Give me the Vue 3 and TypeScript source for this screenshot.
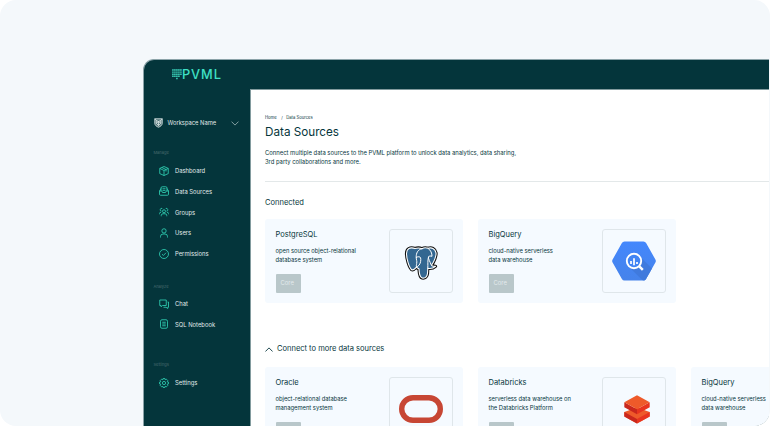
<script setup lang="ts">
type IconName = 'box' | 'inbox' | 'groups' | 'user' | 'check' | 'chat' | 'notebook' | 'gear'
type LogoName = 'postgres' | 'bigquery' | 'oracle' | 'databricks'

interface NavItem { label: string; icon: IconName }
interface NavSection { title: string; items: NavItem[] }
interface Source { name: string; lines: [string, string]; logo: LogoName }

const icons: Record<IconName, string[]> = {
  box: ['M10 1 18.500 4.800v10.400L10 19l-8.500-3.800V4.800z', 'M1.500 4.800 10 9l8.500-4.200M10 9v10M5.700 3l8.300 4v4'],
  inbox: ['M1 10h4.500l1.500 3h6l1.500-3H19v6.500a2 2 0 0 1-2 2H3a2 2 0 0 1-2-2z', 'M1 10l3-5M19 10l-3-5', 'M4 10V4a2.500 2.500 0 0 1 2.500-2.500h7A2.500 2.500 0 0 1 16 4v6M7 5.500h6M7 8.800h6'],
  groups: ['M10 5.500a3 3 0 1 1 0 6 3 3 0 0 1 0-6z', 'M4.500 18.500v-1.500a3.500 3.500 0 0 1 3.500-3.500h4a3.500 3.500 0 0 1 3.500 3.500v1.500', 'M5 8.300A2.800 2.800 0 1 1 6.500 3M15 8.300A2.800 2.800 0 1 0 13.500 3', 'M.8 14.500v-1.500A3 3 0 0 1 4 10.500M19.200 14.500v-1.500A3 3 0 0 0 16 10.500'],
  user: ['M10 1.500a4.300 4.300 0 1 1 0 8.600 4.300 4.300 0 0 1 0-8.600z', 'M3 19v-2a5 5 0 0 1 5-5h4a5 5 0 0 1 5 5v2'],
  check: ['M10 1a9 9 0 1 1 0 18 9 9 0 0 1 0-18z', 'M6 10.300l2.800 2.700L14 7.500'],
  chat: ['M1.500 2h13v11H7l-3 2.500V13H1.500z', 'M17 6h2v10.500h-1.500V19L14 16.500H9'],
  notebook: ['M6 1.500h8a3 3 0 0 1 3 3v11a3 3 0 0 1-3 3H6a3 3 0 0 1-3-3v-11a3 3 0 0 1 3-3z', 'M6.500 6.500h7M6.500 10h7M6.500 13.500h7'],
  gear: ['M8.300 1h3.400l.6 2.600 2.400-1.300 2.900 2.900-1.300 2.400 2.700.7v3.400l-2.700.7 1.300 2.400-2.900 2.900-2.400-1.300-.6 2.600H8.300l-.6-2.600-2.400 1.300-2.900-2.900 1.300-2.400L1 11.700V8.300l2.700-.7-1.300-2.400 2.900-2.900 2.400 1.300z', 'M10 6.800a3.200 3.200 0 1 1 0 6.400 3.200 3.200 0 0 1 0-6.400z'],
}

const sections: NavSection[] = [
  {
    title: 'Manage',
    items: [
      { label: 'Dashboard', icon: 'box' },
      { label: 'Data Sources', icon: 'inbox' },
      { label: 'Groups', icon: 'groups' },
      { label: 'Users', icon: 'user' },
      { label: 'Permissions', icon: 'check' },
    ],
  },
  {
    title: 'Analyze',
    items: [
      { label: 'Chat', icon: 'chat' },
      { label: 'SQL Notebook', icon: 'notebook' },
    ],
  },
  { title: 'Settings', items: [{ label: 'Settings', icon: 'gear' }] },
]

const groups: { id: string; sources: Source[] }[] = [
  {
    id: 'connected',
    sources: [
      { name: 'PostgreSQL', lines: ['open source object-relational', 'database system'], logo: 'postgres' },
      { name: 'BigQuery', lines: ['cloud-native serverless', 'data warehouse'], logo: 'bigquery' },
    ],
  },
  {
    id: 'more',
    sources: [
      { name: 'Oracle', lines: ['object-relational database', 'management system'], logo: 'oracle' },
      { name: 'Databricks', lines: ['serverless data warehouse on', 'the Databricks Platform'], logo: 'databricks' },
      { name: 'BigQuery', lines: ['cloud-native serverless', 'data warehouse'], logo: 'bigquery' },
    ],
  },
]

const dotColumns = [4, 4, 5, 4, 3]

const elephant =
  'M12 3.600C7 1.500 3.500 4 3.500 8.500c0 5 2.500 14 5.200 16.200 1.600 1 3-.7 4.800-2.700 1 1.500 2 1.500 2.500 2 .3 2.500 0 8 3.200 9 3 .5 5-1.500 5.300-4.500.2-2.200.2-4 .3-5.200 2.800.5 5.200.3 7.700-2-1.500-.3-3.500.3-4-1 2.500-3.500 5-9.500 4.500-12.500C32 3.500 28.500 2 25 3.300c-2-.8-4-.8-6 .4-2.400-1-5-.9-7-.1z'
</script>

<template>
  <div class="stage">
    <div class="window">
      <header class="topbar">
        <svg class="brand-mark" viewBox="0 0 10 11">
          <template v-for="(count, c) in dotColumns" :key="c">
            <rect v-for="r in count" :key="r" :x="c * 2 + 0.2" :y="(r - 1) * 2.1 + 0.3" width="1.450" height="1.450" rx="0.200" />
          </template>
        </svg>
        <span class="brand-name">PVML</span>
      </header>

      <div class="body">
        <aside class="sidebar">
          <div class="workspace">
            <svg class="shield" viewBox="0 0 18 20">
              <path d="M1.500 1.500h15v9c0 4-3.500 6.500-7.500 8-4-1.500-7.500-4-7.500-8z" />
              <path d="M4.500 5l4.500 2 4.500-2v5.500L9 15l-4.500-4.500zM9 7v8M4.500 10.500 9 7l4.500 3.500M1.500 1.500l3 3.500M16.500 1.500l-3 3.500" />
            </svg>
            <span class="workspace-name">Workspace Name</span>
            <svg class="chevron" viewBox="0 0 8 5"><path d="M.5.600 4 4.100 7.500.600" /></svg>
          </div>

          <nav>
            <section v-for="s in sections" :key="s.title" class="nav-section">
              <div class="nav-title">{{ s.title }}</div>
              <div v-for="item in s.items" :key="item.label" class="nav-item">
                <svg class="nav-icon" viewBox="0 0 20 20">
                  <path v-for="d in icons[item.icon]" :key="d" :d="d" />
                </svg>
                <span>{{ item.label }}</span>
              </div>
            </section>
          </nav>
        </aside>

        <main class="content">
          <div class="crumbs"><span>Home</span><span class="slash">/</span><span>Data Sources</span></div>
          <h1>Data Sources</h1>
          <p class="intro">
            Connect multiple data sources to the PVML platform to unlock data analytics, data sharing,<br />
            3rd party collaborations and more.
          </p>
          <template v-for="g in groups" :key="g.id">
            <h2 v-if="g.id === 'connected'" class="connected">Connected</h2>
            <h2 v-else class="more">
              <svg viewBox="0 0 8 5"><path d="M.4 4.500 4 .9l3.600 3.600" /></svg>
              <span>Connect to more data sources</span>
            </h2>
            <div class="cards">
              <article v-for="src in g.sources" :key="src.name" class="card">
                <div class="info">
                  <h3>{{ src.name }}</h3>
                  <p>{{ src.lines[0] }}<br />{{ src.lines[1] }}</p>
                  <button type="button">Core</button>
                </div>
                <div class="logo-box">
                  <svg v-if="src.logo === 'postgres'" class="postgres" width="36" height="36" viewBox="0 0 36 36">
                    <g stroke-linejoin="round" stroke-linecap="round">
                      <path fill="#336791" stroke="#111" stroke-width="3.200" :d="elephant" />
                      <path fill="#336791" stroke="#fff" stroke-width="1.100" :d="elephant" />
                      <path fill="none" stroke="#fff" stroke-width="1" d="M19 3.700c-4.500.8-5.800 4.600-5.800 8.300 0 3 1 4 .5 6.500-.2 1.200-.7 2.200-.2 3.500M13.200 12.500c1.500-1.200 4-1 4.400.3.400 2 .2 5-1.400 7.200-.8 1.200-2 1.700-2.700 2M25 3.300c3 2 4 5 4 8-1.500-.5-3-.3-3.500.5-.6 2 1.800 5 2.500 7.700M25.500 12c-1 3.500-.5 7-.7 11.300" />
                    </g>
                  </svg>
                  <svg v-else-if="src.logo === 'bigquery'" width="44" height="40" viewBox="0 0 44 40">
                    <defs>
                      <linearGradient id="bq" x1="0" y1="0" x2="0" y2="1"><stop offset="0" stop-color="#4387fd" /><stop offset="1" stop-color="#4683ea" /></linearGradient>
                      <clipPath id="hex"><path d="M12.500.5h19a3 3 0 0 1 2.600 1.500l9.300 16.500a3 3 0 0 1 0 3L34.100 38a3 3 0 0 1-2.600 1.500h-19A3 3 0 0 1 9.900 38L.6 21.500a3 3 0 0 1 0-3L9.900 2A3 3 0 0 1 12.500.5z" /></clipPath>
                    </defs>
                    <g clip-path="url(#hex)">
                      <path fill="url(#bq)" d="M0 0h44v40H0z" />
                      <path fill="#3f78d8" opacity=".8" d="M27 14.500 45 32.500v9H33L17 26l10-2z" />
                    </g>
                    <circle cx="22" cy="20" r="7.200" fill="#4285f4" stroke="#fff" stroke-width="1.900" />
                    <path d="m27.300 25.300 3.500 3.500" stroke="#fff" stroke-width="2.500" />
                    <path d="M19 20v3M22 17.300v7M25 21v2" stroke="#fff" stroke-width="1.700" />
                  </svg>
                  <svg v-else-if="src.logo === 'oracle'" width="44" height="28" viewBox="0 0 44 28">
                    <rect x="2.700" y="2.700" width="38.600" height="22.600" rx="11.300" fill="none" stroke="#c74634" stroke-width="5.400" />
                  </svg>
                  <svg v-else class="bricks" width="26" height="29" viewBox="0 0 26 29">
                    <path fill="#ee5a2a" d="M13 12.500 25.700 17v4.500L13 28.600.3 21.500V17z" />
                    <path fill="#c9271d" d="M.3 17 13 24v4.600L.3 21.500z" />
                    <path fill="#e8341f" d="M25.700 17 13 24v4.600l12.700-7.100z" />
                    <path fill="#c9271d" d="M.3 7.200 13 14.300v5L.3 12.200z" />
                    <path fill="#e8341f" d="M25.700 7.200 13 14.300v5l12.700-7.100z" />
                    <path fill="#ee5a2a" d="M13 .2 25.700 7.200 13 14.300.3 7.200z" />
                  </svg>
                </div>
              </article>
            </div>
          </template>
        </main>
      </div>
    </div>
  </div>
</template>

<style>
body {
  background: #fff;
  overflow: hidden;
}
</style>

<style scoped>
* {
  box-sizing: border-box;
}
.stage {
  width: 770px;
  height: 426px;
  padding: 59px 1px 0 143px;
  border-radius: 16px;
  background: #f4f8fb;
  overflow: hidden;
  font-family: Inter, "Liberation Sans", sans-serif;
  color: #06363c;
}
.window {
  height: 367px;
  border: solid #8ba3a8;
  border-width: 1px 0 0 1px;
  border-radius: 11px 0 0;
  background: #04353b;
  overflow: hidden;
}
.topbar {
  display: flex;
  align-items: center;
  height: 29px;
  padding-left: 28px;
  color: #3fe0c5;
}
.brand-mark {
  width: 10px;
  height: 11px;
  fill: #3fe0c5;
}
.brand-name {
  font-size: 12.800px;
  font-weight: 500;
  line-height: 29px;
  letter-spacing: 0.900px;
}
.body {
  display: flex;
  height: 337px;
}
.sidebar {
  flex: 0 0 106px;
  padding-left: 9.500px;
  color: #e0eaea;
}
.workspace {
  display: flex;
  align-items: center;
  height: 20px;
  margin-top: 24px;
}
.shield {
  width: 9px;
  height: 10px;
  fill: #56777b;
  stroke: #e5eeee;
  stroke-width: 1.500;
}
.workspace-name {
  width: 63px;
  margin-left: 5px;
  font-size: 5.800px;
  line-height: 10px;
  white-space: nowrap;
}
.chevron {
  width: 8px;
  height: 5px;
  fill: none;
  stroke: #b9cccc;
  stroke-width: 0.700;
}
nav {
  padding-top: 12.400px;
}
.nav-section {
  margin-bottom: 14.600px;
}
.nav-section:nth-child(2) {
  margin-bottom: 22.600px;
}
.nav-title {
  height: 14.800px;
  line-height: 16.400px;
  font-size: 4px;
  color: #4a6c70;
}
.nav-item {
  display: flex;
  align-items: center;
  gap: 6px;
  height: 20.750px;
  padding-left: 5.500px;
  font-size: 5.850px;
}
.nav-icon {
  width: 10px;
  height: 10px;
  fill: none;
  stroke: #2fd0b4;
  stroke-width: 1.700;
}
.content {
  flex: 1;
  min-width: 0;
  padding: 22px 0 0 14px;
  border: solid #829b9e;
  border-width: 1px 0 0 1px;
  background: #fff;
  overflow: hidden;
}
.crumbs {
  display: flex;
  height: 10px;
  font-size: 4.200px;
  line-height: 11.500px;
}
.slash {
  margin: 0 3.500px 0 4.500px;
}
h1, h2, h3, p {
  margin: 0;
  font-weight: 400;
}
h1 {
  height: 20px;
  font-size: 11.700px;
  line-height: 20px;
}
.intro {
  height: 40px;
  padding-top: 6px;
  border-bottom: 1px solid #e3e8e9;
  font-size: 5.860px;
  line-height: 9px;
  white-space: nowrap;
}
h2 {
  display: flex;
  align-items: center;
  font-size: 7.520px;
  line-height: 12px;
}
.connected {
  height: 37px;
  padding-top: 5px;
}
.more {
  gap: 4px;
  height: 12px;
  margin: 40px 0 12px;
}
.more svg {
  width: 8px;
  height: 5px;
  margin-top: 1px;
  fill: none;
  stroke: #06363c;
  stroke-width: 0.900;
}
.cards {
  display: flex;
  gap: 15px;
}
.card {
  display: flex;
  flex: 0 0 198px;
  justify-content: space-between;
  height: 84px;
  padding: 10px 10px 10px 10.500px;
  border-radius: 3px;
  background: #f5faff;
}
h3 {
  font-size: 7.500px;
  line-height: 11px;
}
.card p {
  margin-top: 6px;
  font-size: 5.800px;
  line-height: 9px;
  white-space: nowrap;
}
button {
  display: block;
  width: 25.500px;
  height: 18.500px;
  margin-top: 10px;
  padding: 0 0 0 5px;
  border: 0;
  border-radius: 1px;
  background: #b9c7ca;
  color: #e3eaec;
  font: 5.860px/18px Inter, "Liberation Sans", sans-serif;
  text-align: left;
}
.logo-box {
  display: flex;
  flex: 0 0 64px;
  align-items: center;
  justify-content: center;
  height: 64px;
  border: 1px solid #dfe6ea;
  border-radius: 3px;
}
.postgres {
  margin-top: 3px;
}
.bricks {
  margin-left: 5px;
}
</style>
